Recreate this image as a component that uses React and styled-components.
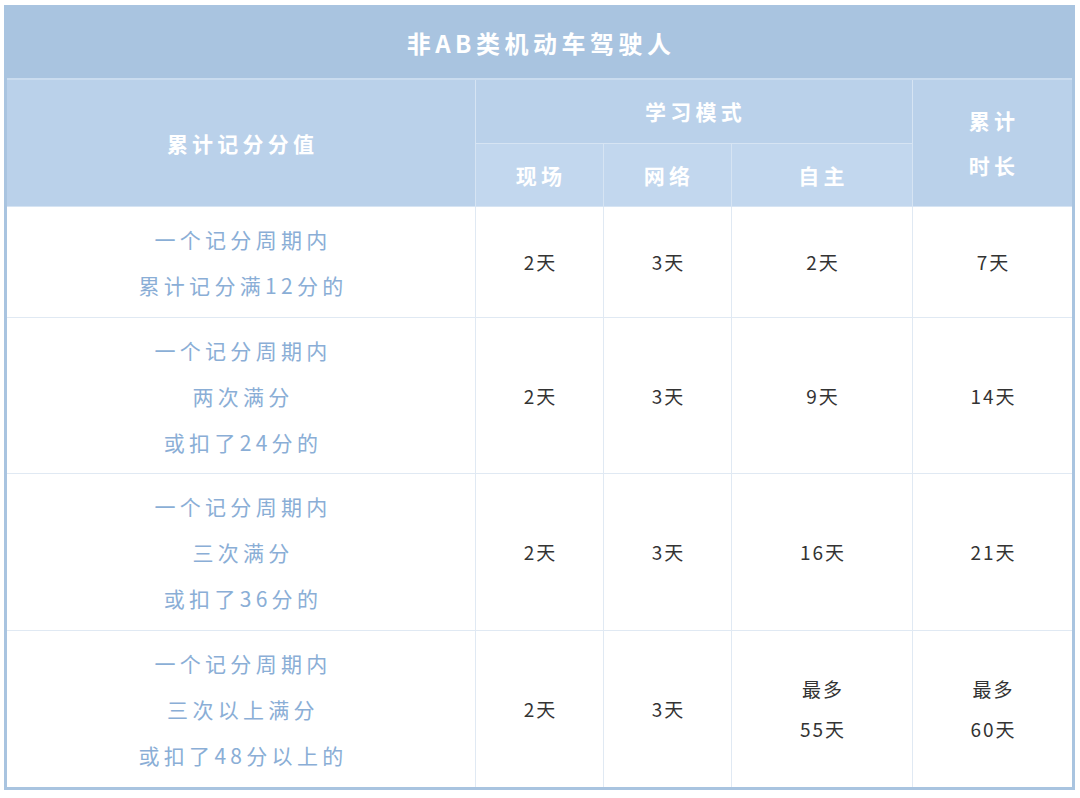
import React from "react";
import styled, { createGlobalStyle } from "styled-components";

const Global = createGlobalStyle`
  html, body { margin: 0; padding: 0; background: #ffffff; }
  body {
    padding: 5px 0 0 4px;
    font-family: "Noto Sans CJK SC", "Noto Sans", sans-serif;
  }
`;

const Table = styled.table`
  width: 1068px;
  table-layout: fixed;
  border-collapse: collapse;
  border: 3px solid #a9c4e0;
`;

const TitleCell = styled.th`
  height: 68px;
  padding: 0 0 2px 3px;
  background: #a9c4e0;
  color: #ffffff;
  font-size: 24px;
  font-weight: 700;
  letter-spacing: 4.5px;
  text-align: center;
  border-bottom: 2px solid #cadcef;
`;

const HeadCell = styled.th`
  height: ${(p) => p.$h || 62}px;
  padding: 0 0 0 3px;
  background: ${(p) => (p.$sub ? "#c2d7ee" : "#bad1ea")};
  color: #ffffff;
  font-size: 21px;
  font-weight: 700;
  letter-spacing: 4.2px;
  line-height: 45px;
  text-align: center;
  border: 1px solid #d6e4f3;
`;

const LabelCell = styled.td`
  height: ${(p) => p.$h}px;
  padding: 0 0 0 4px;
  color: #8aaed6;
  font-size: 21px;
  letter-spacing: 4.3px;
  line-height: 46px;
  text-align: center;
  border: 1px solid #e0e9f3;
`;

const ValueCell = styled.td`
  padding: 0 0 0 2px;
  color: #333333;
  font-size: 19px;
  letter-spacing: 2px;
  line-height: 40px;
  text-align: center;
  border: 1px solid #e0e9f3;
`;

const Line = styled.div``;

const rows = [
  { h: 110, label: ["一个记分周期内", "累计记分满12分的"], v: ["2天", "3天", ["2天"], ["7天"]] },
  { h: 155, label: ["一个记分周期内", "两次满分", "或扣了24分的"], v: ["2天", "3天", ["9天"], ["14天"]] },
  { h: 156, label: ["一个记分周期内", "三次满分", "或扣了36分的"], v: ["2天", "3天", ["16天"], ["21天"]] },
  { h: 156, label: ["一个记分周期内", "三次以上满分", "或扣了48分以上的"], v: ["2天", "3天", ["最多", "55天"], ["最多", "60天"]] },
];

export default function App() {
  return (
    <>
      <Global />
      <Table>
        <colgroup>
          <col style={{ width: 470 }} />
          <col style={{ width: 128 }} />
          <col style={{ width: 128 }} />
          <col style={{ width: 181 }} />
          <col style={{ width: 161 }} />
        </colgroup>
        <thead>
          <tr>
            <TitleCell colSpan={5}>非AB类机动车驾驶人</TitleCell>
          </tr>
          <tr>
            <HeadCell rowSpan={2}>累计记分分值</HeadCell>
            <HeadCell colSpan={3} $h={63}>学习模式</HeadCell>
            <HeadCell rowSpan={2}>
              <Line>累计</Line>
              <Line>时长</Line>
            </HeadCell>
          </tr>
          <tr>
            <HeadCell $sub>现场</HeadCell>
            <HeadCell $sub>网络</HeadCell>
            <HeadCell $sub>自主</HeadCell>
          </tr>
        </thead>
        <tbody>
          {rows.map((r, i) => (
            <tr key={i}>
              <LabelCell $h={r.h}>
                {r.label.map((t) => (
                  <Line key={t}>{t}</Line>
                ))}
              </LabelCell>
              <ValueCell>{r.v[0]}</ValueCell>
              <ValueCell>{r.v[1]}</ValueCell>
              <ValueCell>
                {r.v[2].map((t) => (
                  <Line key={t}>{t}</Line>
                ))}
              </ValueCell>
              <ValueCell>
                {r.v[3].map((t) => (
                  <Line key={t}>{t}</Line>
                ))}
              </ValueCell>
            </tr>
          ))}
        </tbody>
      </Table>
    </>
  );
}
